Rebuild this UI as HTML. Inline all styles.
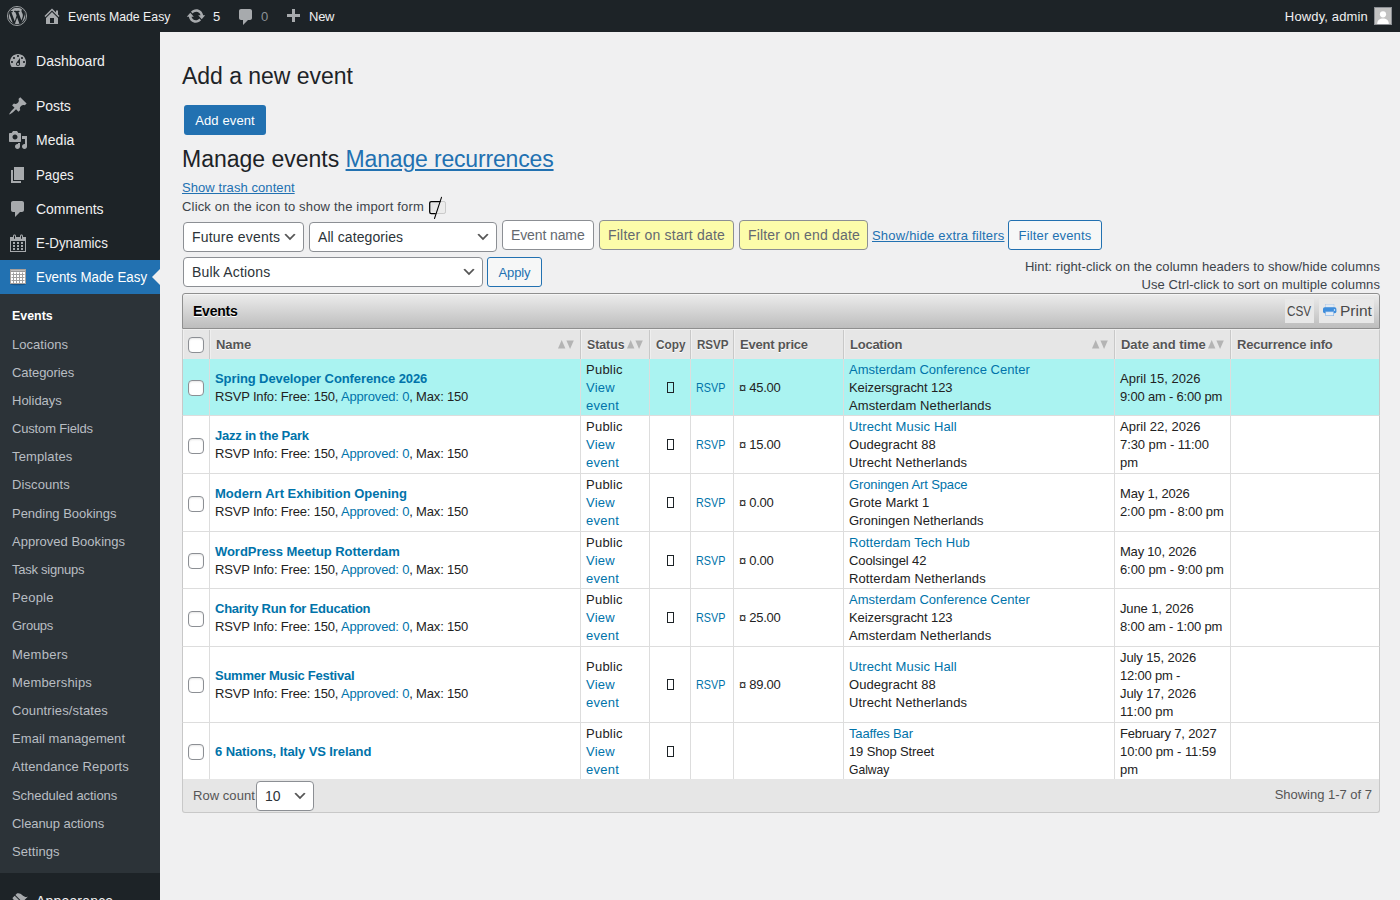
<!DOCTYPE html><html><head><meta charset="utf-8"><title>Events</title><style>
*{box-sizing:border-box;margin:0;padding:0}
html,body{width:1400px;height:900px;overflow:hidden}
body{background:#f0f0f1;font-family:"Liberation Sans",sans-serif;font-size:13px;color:#3c434a;position:relative;line-height:1.4}
.abs{position:absolute;white-space:nowrap}
.ic{position:absolute;display:block}
#bar{position:absolute;left:0;top:0;width:1400px;height:32px;background:#1d2327}
#bar .t{position:absolute;top:1px;height:32px;line-height:32px;font-size:13px;color:#f0f0f1;white-space:nowrap}
#side{position:absolute;left:0;top:32px;width:160px;height:868px;background:#1d2327}
#sub{position:absolute;left:0;top:294px;width:160px;height:579px;background:#2c3338}
.mi{position:absolute;left:36px;height:34px;line-height:34px;font-size:14px;color:#f0f0f1;white-space:nowrap}
.si{position:absolute;left:12px;height:28px;line-height:28px;font-size:13px;color:#b9bec3;white-space:nowrap}
a,.lnk{color:#2271b1;text-decoration:none}
.u{text-decoration:underline}
h1{position:absolute;font-weight:400;font-size:23px;color:#1d2327;white-space:nowrap;line-height:30px}
.sel{position:absolute;background:#fff;border:1px solid #8c8f94;border-radius:4px;font-size:14px;color:#2c3338;white-space:nowrap;padding-left:8px}
.sel svg{position:absolute;right:5px;top:50%;margin-top:-8px;width:16px;height:16px}
.btn2{position:absolute;background:#f6f7f7;border:1px solid #2271b1;border-radius:3px;color:#2271b1;font-size:13px;text-align:center;white-space:nowrap}
.inp{position:absolute;border:1px solid #8c8f94;border-radius:4px;font-size:14px;white-space:nowrap;padding-left:8px}
</style></head><body>
<div id="bar">
<svg class="ic" style="left:7px;top:6px;width:20px;height:20px" viewBox="0 0 20 20"><defs><clipPath id="wpc"><circle cx="10" cy="10" r="8.500"/></clipPath></defs><circle cx="10" cy="10" r="9.550" fill="none" stroke="#a7aaad" stroke-width=".9"/><circle cx="10" cy="10" r="8.300" fill="#a7aaad"/><g clip-path="url(#wpc)"><path fill="#1d2327" d="M20 10c0-5.51-4.49-10-10-10C4.48 0 0 4.49 0 10c0 5.52 4.48 10 10 10 5.51 0 10-4.48 10-10zM7.78 15.37L4.37 6.22c.55-.02 1.17-.08 1.17-.08.5-.06.44-1.13-.06-1.11 0 0-1.45.11-2.37.11-.18 0-.37 0-.58-.01C4.12 2.69 6.87 1.11 10 1.11c2.33 0 4.45.87 6.05 2.34-.68-.11-1.65.39-1.65 1.58 0 .74.45 1.36.9 2.1.35.61.55 1.36.55 2.46 0 1.49-1.4 5-1.4 5l-3.03-8.37c.54-.02.82-.17.82-.17.5-.05.44-1.25-.06-1.22 0 0-1.44.12-2.38.12-.87 0-2.33-.12-2.33-.12-.5-.03-.56 1.2-.06 1.22l.92.08 1.26 3.41zM17.41 10c.24-.64.74-1.87.43-4.25.7 1.29 1.05 2.71 1.05 4.25 0 3.29-1.73 6.24-4.4 7.78.97-2.59 1.94-5.2 2.92-7.78zM6.1 18.09C3.12 16.65 1.11 13.53 1.11 10c0-1.3.23-2.48.72-3.59C3.25 10.3 4.67 14.2 6.1 18.09zm4.03-6.63l2.58 6.98c-.86.29-1.76.45-2.71.45-.79 0-1.57-.11-2.29-.33.81-2.38 1.62-4.74 2.42-7.1z"/></g></svg>
<svg class="ic" style="left:42px;top:6px;width:20px;height:20px;" viewBox="0 0 20 20"><path fill="#a7aaad" d="M16 8.5l1.53 1.53-1.06 1.06L10 4.62l-6.47 6.47-1.06-1.06L10 2.500l4 4v-2h2v4zm-6-2.460l6 5.990V18H4v-5.970zM12 17v-5H8v5h4z"/></svg>
<span class="t" style="left:68px" ><span id="x1" style="display:inline-block;transform:scaleX(0.945);transform-origin:0 50%;margin-right:-6.0px;">Events Made Easy</span></span>
<svg class="ic" style="left:186px;top:6px;width:20px;height:20px;" viewBox="0 0 20 20"><path fill="#a7aaad" d="M10.2 3.28c3.53 0 6.43 2.61 6.92 6h2.080l-3.500 4-3.500-4h2.320c-.45-1.970-2.210-3.450-4.320-3.450-1.450 0-2.730.71-3.540 1.780L4.950 5.660C6.230 4.200 8.110 3.280 10.200 3.280zm-.4 13.440c-3.520 0-6.430-2.610-6.920-6H.8l3.500-4c1.170 1.330 2.330 2.670 3.500 4H5.480c.45 1.970 2.210 3.450 4.320 3.450 1.450 0 2.730-.71 3.540-1.780l1.710 1.950c-1.280 1.460-3.150 2.380-5.250 2.380z"/></svg>
<span class="t" style="left:213px"><span id="x2">5</span></span>
<svg class="ic" style="left:236px;top:7px;width:20px;height:20px;" viewBox="0 0 20 20"><path fill="#a7aaad" d="M5 2h9c1.100 0 2 .9 2 2v7c0 1.100-.9 2-2 2h-2l-5 5v-5H5c-1.100 0-2-.9-2-2V4c0-1.100.9-2 2-2z"/></svg>
<span class="t" style="left:261px;color:#8c9196"><span id="x3">0</span></span>
<svg class="ic" style="left:283px;top:7px;width:20px;height:20px;" viewBox="0 0 20 20"><path fill="#a7aaad" d="M17 7v3h-5v5H9v-5H4V7h5V2h3v5h5z"/></svg>
<span class="t" style="left:309px" ><span id="x4" style="letter-spacing:-0.250px;">New</span></span>
<span class="t" style="right:32px" ><span id="x5" style="letter-spacing:0.145px;">Howdy, admin</span></span>
<div class="abs" style="left:1374px;top:7px;width:18px;height:18px;border:1px solid #8c8f94;background:#c2c2c2;overflow:hidden"><svg viewBox="0 0 16 16" style="position:absolute;left:0;top:0;width:16px;height:16px"><circle cx="8" cy="6.3" r="3.1" fill="#fff"/><path d="M2.2 16c0-4 2.6-5.6 5.800-5.600s5.800 1.600 5.800 5.600z" fill="#fff"/></svg></div>
</div>
<div id="side"></div>
<div class="abs" style="left:0;top:260px;width:160px;height:34px;background:#2271b1"></div>
<div class="abs" style="left:152px;top:269px;width:0;height:0;border:8px solid transparent;border-right-color:#f0f0f1;border-left-width:0"></div>
<div id="sub"></div>
<svg class="ic" style="left:8px;top:51px;width:20px;height:20px;" viewBox="0 0 20 20"><path fill="#a7aaad" d="M3.760 16h12.480c1.100-1.370 1.760-3.110 1.760-5 0-4.420-3.580-8-8-8s-8 3.580-8 8c0 1.890.66 3.630 1.760 5zM10 4c.55 0 1 .45 1 1s-.45 1-1 1-1-.45-1-1 .45-1 1-1zM6 6c.55 0 1 .45 1 1s-.45 1-1 1-1-.45-1-1 .45-1 1-1zm8 0c.55 0 1 .45 1 1s-.45 1-1 1-1-.45-1-1 .45-1 1-1zm-5.370 5.550L12 7v6c0 1.100-.9 2-2 2s-2-.9-2-2c0-.57.24-1.080.63-1.450zM4 10c.55 0 1 .45 1 1s-.45 1-1 1-1-.45-1-1 .45-1 1-1zm12 0c.55 0 1 .45 1 1s-.45 1-1 1-1-.45-1-1 .45-1 1-1zm-5 3c0-.55-.45-1-1-1s-1 .45-1 1 .45 1 1 1 1-.45 1-1z"/></svg>
<span class="mi" style="top:44px"><span id="x6" style="letter-spacing:0.050px;">Dashboard</span></span>
<svg class="ic" style="left:8px;top:96px;width:20px;height:20px;" viewBox="0 0 20 20"><path fill="#a7aaad" d="M10.440 3.020l1.820-1.820 6.360 6.350-1.830 1.820c-1.050-.68-2.480-.57-3.410.36l-.75.75c-.92.93-1.040 2.350-.35 3.410l-1.830 1.820-2.410-2.410-2.800 2.790c-.42.42-3.380 2.710-3.800 2.290s1.860-3.390 2.280-3.810l2.790-2.790L4.100 9.360l1.830-1.820c1.050.69 2.480.57 3.400-.36l.75-.75c.93-.92 1.050-2.350.36-3.410z"/></svg>
<span class="mi" style="top:89px"><span id="x7" style="letter-spacing:-0.050px;">Posts</span></span>
<svg class="ic" style="left:8px;top:130px;width:20px;height:20px;" viewBox="0 0 20 20"><path fill="#a7aaad" d="M13 11V4c0-.55-.45-1-1-1h-1.670L9 1H5L3.670 3H2c-.55 0-1 .45-1 1v7c0 .55.45 1 1 1h10c.55 0 1-.45 1-1zM7 4.500c1.380 0 2.500 1.120 2.500 2.500S8.380 9.500 7 9.500 4.500 8.380 4.500 7 5.620 4.500 7 4.500zM14 6h5v10.500c0 1.380-1.120 2.500-2.500 2.500S14 17.880 14 16.500s1.120-2.500 2.500-2.500c.17 0 .34.02.5.05V9h-3V6zm-4 8.050V13h2v3.500c0 1.380-1.120 2.500-2.500 2.500S7 17.880 7 16.500 8.120 14 9.500 14c.17 0 .34.02.5.05z"/></svg>
<span class="mi" style="top:123px"><span id="x8" style="letter-spacing:0.050px;">Media</span></span>
<svg class="ic" style="left:8px;top:165px;width:20px;height:20px;" viewBox="0 0 20 20"><path fill="#a7aaad" d="M6 15V2h10v13H6zm-1 1h8v2H3V5h2v11z"/></svg>
<span class="mi" style="top:158px"><span id="x9" style="display:inline-block;transform:scaleX(0.9487);transform-origin:0 50%;margin-right:-2.0px;">Pages</span></span>
<svg class="ic" style="left:8px;top:199px;width:20px;height:20px;" viewBox="0 0 20 20"><path fill="#a7aaad" d="M5 2h9c1.100 0 2 .9 2 2v7c0 1.100-.9 2-2 2h-2l-5 5v-5H5c-1.100 0-2-.9-2-2V4c0-1.100.9-2 2-2z"/></svg>
<span class="mi" style="top:192px"><span id="x10" style="letter-spacing:-0.014px;">Comments</span></span>
<svg class="ic" style="left:8px;top:233px;width:20px;height:20px;" viewBox="0 0 20 20"><path fill="#a7aaad" d="M15 4h3v15H2V4h3V3c0-.41.15-.76.44-1.060.29-.29.65-.44 1.060-.44s.77.15 1.060.44c.29.3.44.65.44 1.060v1h4V3c0-.41.15-.76.44-1.060.29-.29.65-.44 1.060-.44s.77.15 1.060.44c.29.3.44.65.44 1.060v1zM6 3v2.500c0 .14.05.26.15.36.09.09.21.14.35.14s.26-.05.35-.14c.1-.1.15-.22.15-.36V3c0-.14-.05-.26-.15-.35-.09-.1-.21-.15-.35-.15s-.26.05-.35.15c-.1.09-.15.21-.15.35zm7 0v2.500c0 .14.05.26.14.36.1.09.22.14.36.14s.26-.05.36-.14c.09-.1.14-.22.14-.36V3c0-.14-.05-.26-.14-.35-.1-.1-.22-.15-.36-.15s-.26.05-.36.15c-.09.09-.14.21-.14.35zm4 15V8H3v10h14zM7 9v2H5V9h2zm2 0h2v2H9V9zm4 2V9h2v2h-2zm-6 1v2H5v-2h2zm2 0h2v2H9v-2zm4 2v-2h2v2h-2zm-6 1v2H5v-2h2zm4 2H9v-2h2v2zm4 0h-2v-2h2v2z"/></svg>
<span class="mi" style="top:226px"><span id="x11" style="display:inline-block;transform:scaleX(0.952);transform-origin:0 50%;margin-right:-3.6px;">E-Dynamics</span></span>
<svg class="ic" style="left:10px;top:269px;width:16px;height:17px" viewBox="0 0 16 17"><defs><linearGradient id="emg" x1="0" y1="0" x2="0" y2="1"><stop offset="0" stop-color="#cfcfcf"/><stop offset="1" stop-color="#858585"/></linearGradient></defs><ellipse cx="8" cy="15.400" rx="7.800" ry=".9" fill="#0f3f6e" opacity=".55"/><rect x=".5" y=".5" width="15" height="14" fill="#fff" stroke="#a6a09c"/><rect x="1" y="1" width="14" height="2" fill="url(#emg)"/><g stroke="#9b9b9b" stroke-width="1" opacity=".95"><path d="M3.500 3.500v10.500M6.500 3.500v10.500M9.500 3.500v10.500M12.500 3.500v10.500M1.500 5.500h13M1.500 8.500h13M1.500 11.500h13"/></g></svg>
<span class="mi" style="top:260px;color:#fff" ><span id="x12" style="display:inline-block;transform:scaleX(0.9513);transform-origin:0 50%;margin-right:-5.7px;">Events Made Easy</span></span>
<span class="si" style="top:302px;color:#fff;font-weight:bold;"><span id="x13" style="display:inline-block;transform:scaleX(0.9535);transform-origin:0 50%;margin-right:-2.0px;">Events</span></span>
<span class="si" style="top:331px;"><span id="x14" style="letter-spacing:0.037px;">Locations</span></span>
<span class="si" style="top:359px;"><span id="x15" style="letter-spacing:-0.078px;">Categories</span></span>
<span class="si" style="top:387px;"><span id="x16">Holidays</span></span>
<span class="si" style="top:415px;"><span id="x17" style="letter-spacing:-0.167px;">Custom Fields</span></span>
<span class="si" style="top:443px;"><span id="x18" style="letter-spacing:0.125px;">Templates</span></span>
<span class="si" style="top:471px;"><span id="x19" style="letter-spacing:0.088px;">Discounts</span></span>
<span class="si" style="top:500px;"><span id="x20" style="letter-spacing:-0.020px;">Pending Bookings</span></span>
<span class="si" style="top:528px;"><span id="x21" style="letter-spacing:0.019px;">Approved Bookings</span></span>
<span class="si" style="top:556px;"><span id="x22" style="letter-spacing:-0.245px;">Task signups</span></span>
<span class="si" style="top:584px;"><span id="x23" style="letter-spacing:0.180px;">People</span></span>
<span class="si" style="top:612px;"><span id="x24" style="letter-spacing:-0.260px;">Groups</span></span>
<span class="si" style="top:641px;"><span id="x25" style="letter-spacing:0.267px;">Members</span></span>
<span class="si" style="top:669px;"><span id="x26" style="letter-spacing:0.180px;">Memberships</span></span>
<span class="si" style="top:697px;"><span id="x27" style="letter-spacing:0.127px;">Countries/states</span></span>
<span class="si" style="top:725px;"><span id="x28" style="letter-spacing:0.067px;">Email management</span></span>
<span class="si" style="top:753px;"><span id="x29" style="letter-spacing:0.112px;">Attendance Reports</span></span>
<span class="si" style="top:782px;"><span id="x30" style="letter-spacing:-0.062px;">Scheduled actions</span></span>
<span class="si" style="top:810px;"><span id="x31" style="letter-spacing:-0.071px;">Cleanup actions</span></span>
<span class="si" style="top:838px;"><span id="x32" style="letter-spacing:0.086px;">Settings</span></span>
<svg class="ic" style="left:8px;top:891px;width:20px;height:20px;" viewBox="0 0 20 20"><path fill="#a7aaad" d="M14.480 11.060L7.410 3.990l1.500-1.500c.5-.56 2.300-.47 3.510.32 1.210.8 1.430 1.280 2.910 2.100 1.180.64 2.450 1.260 4.450.85zm-.71.71L6.700 4.700 4.930 6.470c-.39.39-.39 1.020 0 1.410l1.060 1.060c.39.39.39 1.030 0 1.420-.6.6-1.430 1.110-2.210 1.690-.35.26-.7.53-1.010.84C1.430 14.230.4 16.080 1.400 17.070c.99 1 2.840-.03 4.180-1.360.31-.31.58-.66.85-1.020.57-.78 1.080-1.610 1.690-2.210.39-.39 1.020-.39 1.410 0l1.060 1.060c.39.39 1.020.39 1.410 0z"/></svg>
<span class="mi" style="top:884px"><span id="x33" style="letter-spacing:0.178px;">Appearance</span></span>
<h1 style="left:182px;top:61px" ><span id="x34" style="letter-spacing:-0.036px;">Add a new event</span></h1>
<div class="abs" style="left:184px;top:105px;width:82px;height:30px;background:#2271b1;border-radius:3px;color:#fff;font-size:13px;line-height:32px;text-align:center" ><span id="x35" style="letter-spacing:0.125px;">Add event</span></div>
<h1 style="left:182px;top:144px" ><span id="x36" style="letter-spacing:-0.008px;">Manage events</span> <span class="lnk u"><span id="x37" style="letter-spacing:-0.165px;">Manage recurrences</span></span></h1>
<span class="abs lnk u" style="left:182px;top:179px" ><span id="x38" style="letter-spacing:0.076px;">Show trash content</span></span>
<span class="abs" style="left:182px;top:198px" ><span id="x39" style="letter-spacing:0.175px;">Click on the icon to show the import form</span></span>
<svg class="ic" style="left:420px;top:192px;width:40px;height:30px" viewBox="0 0 40 30"><rect x="9.700" y="9.500" width="15.800" height="12" rx="1.600" fill="#ececec" stroke="#c9c9c9"/><rect x="11.500" y="11.500" width="7" height="8" fill="#dedede"/><rect x="12.500" y="12.500" width="5" height="6" fill="#e9e9e9"/><path d="M20.500 9.500H11.300Q9.700 9.500 9.700 11.100V19.900Q9.700 21.500 11.300 21.500H15.700" fill="none" stroke="#000" stroke-width="1.250"/><path d="M21.500 5.300L14.500 26.500" stroke="#000" stroke-width="1.050" stroke-linecap="round"/></svg>
<div class="sel" style="left:183px;top:222px;width:121px;height:30px;line-height:28px"><span id="x40" style="letter-spacing:0.208px;">Future events</span><svg viewBox="0 0 20 20"><path d="M5 6l5 5 5-5 2 1-7 7-7-7 2-1z" fill="#555"/></svg></div>
<div class="sel" style="left:309px;top:222px;width:188px;height:30px;line-height:28px"><span id="x41" style="letter-spacing:0.077px;">All categories</span><svg viewBox="0 0 20 20"><path d="M5 6l5 5 5-5 2 1-7 7-7-7 2-1z" fill="#555"/></svg></div>
<div class="inp" style="left:502px;top:220px;width:92px;height:30px;line-height:28px;background:#fff;color:#646970"><span id="x42" style="letter-spacing:-0.111px;">Event name</span></div>
<div class="inp" style="left:599px;top:220px;width:135px;height:30px;line-height:28px;background:#fcfcaa;color:#646970"><span id="x43" style="letter-spacing:0.211px;">Filter on start date</span></div>
<div class="inp" style="left:739px;top:220px;width:129px;height:30px;line-height:28px;background:#fcfcaa;color:#646970"><span id="x44" style="letter-spacing:0.165px;">Filter on end date</span></div>
<span class="abs lnk u" style="left:872px;top:227px" ><span id="x45" style="letter-spacing:0.200px;">Show/hide extra filters</span></span>
<div class="btn2" style="left:1008px;top:220px;width:94px;height:30px;line-height:30px" ><span id="x46" style="letter-spacing:0.158px;">Filter events</span></div>
<div class="sel" style="left:183px;top:257px;width:300px;height:30px;line-height:28px"><span id="x47" style="letter-spacing:0.182px;">Bulk Actions</span><svg viewBox="0 0 20 20"><path d="M5 6l5 5 5-5 2 1-7 7-7-7 2-1z" fill="#555"/></svg></div>
<div class="btn2" style="left:487px;top:257px;width:55px;height:30px;line-height:30px" ><span id="x48" style="letter-spacing:-0.125px;">Apply</span></div>
<span class="abs" style="right:20px;top:258px" ><span id="x49" style="letter-spacing:0.090px;">Hint: right-click on the column headers to show/hide columns</span></span>
<span class="abs" style="right:20px;top:276px" ><span id="x50" style="letter-spacing:0.088px;">Use Ctrl-click to sort on multiple columns</span></span>
<style>
#tb{position:absolute;left:182px;top:293px;width:1198px;height:520px}
#tt{position:absolute;left:0;top:0;width:1198px;height:36px;border:1px solid #8f8f8f;border-radius:3px 3px 0 0;background:linear-gradient(#ececec,#bdbdbd);box-shadow:inset 0 1px 0 rgba(255,255,255,.5)}
#tt b{position:absolute;left:10px;top:0;line-height:34px;font-size:14px;color:#000;text-shadow:0 1px 0 #fff}
.tbtn{position:absolute;top:5px;height:24px;background:#e8e8e8;color:#4a4a4a;font-size:14px;line-height:24px;white-space:nowrap}
#th{position:absolute;left:0;top:36px;width:1198px;height:30px;background:#e6e6e6;border-left:1px solid #c8c8c8;border-right:1px solid #c8c8c8;border-top:1px solid #efefef}
.hc{position:absolute;top:0;height:29px;line-height:29px;font-weight:bold;font-size:13px;color:#555;text-shadow:0 1px 0 #fff;white-space:nowrap;border-right:1px solid #c8c8c8;border-left:1px solid #efefef;padding-left:5px}
.so{position:absolute;right:6px;top:10px;width:16px;height:9px}
.rw{position:absolute;left:0;width:1198px;background:#fff;border-left:1px solid #c8c8c8;border-right:1px solid #c8c8c8;border-bottom:1px solid #ddd}
.rw.hl{background:#aaf3f1}
.c{position:absolute;top:0;bottom:0;border-right:1px solid #ddd;font-size:13px;color:#222;white-space:nowrap}
.ln{position:absolute;left:5px;line-height:18px}
.ln div{height:18px}
.c a{color:#0073aa}
.c b a,.c b{color:#0073aa}
.cb{position:absolute;width:16px;height:16px;border:1px solid #8c8f94;border-radius:4px;background:#fff;box-shadow:inset 0 1px 2px rgba(0,0,0,.1)}
.tofu{position:absolute;width:7px;height:11px;border:1px solid #1d2327;z-index:2}
#tf{position:absolute;left:0;top:486px;width:1198px;height:34px;background:#e6e6e6;border:1px solid #c8c8c8;border-top:none;border-radius:0 0 3px 3px}
</style>
<div id="tb">
<div id="tt"><b><span id="x51" style="letter-spacing:-0.240px;">Events</span></b>
<div class="tbtn" style="left:1102px;width:29px;text-align:center" ><span id="x52" style="display:inline-block;transform:scaleX(0.8379);transform-origin:0 50%;margin-right:-4.7px;">CSV</span></div>
<div class="tbtn" style="left:1136px;width:55px" id="b_print"><svg style="position:absolute;left:4px;top:5px;width:14px;height:12px" viewBox="0 0 14 12"><rect x="2.400" y=".2" width="8.600" height="3.600" fill="#e1eaf3" stroke="#a9c6e6" stroke-width=".5"/><rect x="0" y="3.200" width="13.400" height="6" rx="1.700" fill="#3f8edc"/><rect x="2.700" y="7.800" width="8" height="3.900" fill="#e6edf5" stroke="#7fb0e4" stroke-width=".6"/><circle cx="11.500" cy="6" r=".75" fill="#fff"/></svg><span style="position:absolute;left:21px"><span id="x53" style="display:inline-block;transform:scaleX(1.1071);transform-origin:0 50%;margin-right:3.0px;">Print</span></span></div>
</div>
<div id="th">
<div class="hc" style="left:0px;width:27px;"></div>
<div class="hc" style="left:27px;width:371px;"><span id="x54" style="letter-spacing:-0.033px;">Name</span><svg class="so" viewBox="0 0 16 9"><path d="M0 8.500L3.700 0l3.700 8.500z" fill="#b4b4b4"/><path d="M8.400 .5h7.400L12.100 9z" fill="#b4b4b4"/></svg></div>
<div class="hc" style="left:398px;width:69px;"><span id="x55" style="display:inline-block;transform:scaleX(0.9439);transform-origin:0 50%;margin-right:-2.3px;">Status</span><svg class="so" viewBox="0 0 16 9"><path d="M0 8.500L3.700 0l3.700 8.500z" fill="#b4b4b4"/><path d="M8.400 .5h7.400L12.100 9z" fill="#b4b4b4"/></svg></div>
<div class="hc" style="left:467px;width:41px;"><span id="x56" style="display:inline-block;transform:scaleX(0.9061);transform-origin:0 50%;margin-right:-3.1px;">Copy</span></div>
<div class="hc" style="left:508px;width:43px;"><span id="x57" style="display:inline-block;transform:scaleX(0.8917);transform-origin:0 50%;margin-right:-3.9px;">RSVP</span></div>
<div class="hc" style="left:551px;width:110px;"><span id="x58" style="letter-spacing:-0.200px;">Event price</span></div>
<div class="hc" style="left:661px;width:271px;"><span id="x59" style="letter-spacing:-0.243px;">Location</span><svg class="so" viewBox="0 0 16 9"><path d="M0 8.500L3.700 0l3.700 8.500z" fill="#b4b4b4"/><path d="M8.400 .5h7.400L12.100 9z" fill="#b4b4b4"/></svg></div>
<div class="hc" style="left:932px;width:116px;"><span id="x60" style="letter-spacing:-0.033px;">Date and time</span><svg class="so" viewBox="0 0 16 9"><path d="M0 8.500L3.700 0l3.700 8.500z" fill="#b4b4b4"/><path d="M8.400 .5h7.400L12.100 9z" fill="#b4b4b4"/></svg></div>
<div class="hc" style="left:1048px;width:148px;border-right:none;"><span id="x61" style="letter-spacing:-0.229px;">Recurrence info</span></div>
<div class="cb" style="left:5px;top:7px"></div>
</div>
<div class="rw hl" style="top:66px;height:57px">
<div class="c" style="left:0;width:27px"><div class="cb" style="left:5px;top:21px"></div></div>
<div class="c" style="left:27px;width:371px;"><div class="ln" style="top:11px"><div><b class="nm"><span id="x62" style="letter-spacing:-0.097px;">Spring Developer Conference 2026</span></b></div><div><span id="x63" style="letter-spacing:-0.174px;">RSVP Info: Free: 150, <a>Approved: 0</a>, Max: 150</span></div></div></div>
<div class="c" style="left:398px;width:69px;"><div class="ln" style="top:2px"><div><span id="x64" style="letter-spacing:0.240px;">Public</span></div><div><a><span id="x65" style="letter-spacing:0.267px;">View</span></a></div><div><a><span id="x66" style="letter-spacing:0.250px;">event</span></a></div></div></div>
<div class="tofu" style="left:484px;top:23px"></div>
<div class="c" style="left:467px;width:41px;"></div>
<div class="c" style="left:508px;width:43px;"><div class="ln" style="top:20px"><div><a><span id="x67" style="display:inline-block;transform:scaleX(0.8278);transform-origin:0 50%;margin-right:-6.2px;">RSVP</span></a></div></div></div>
<div class="c" style="left:551px;width:110px;"><div class="ln" style="top:20px"><div><span id="x68" style="letter-spacing:-0.267px;">¤ 45.00</span></div></div></div>
<div class="c" style="left:661px;width:271px;"><div class="ln" style="top:2px"><div><a><span id="x69" style="letter-spacing:0.031px;">Amsterdam Conference Center</span></a></div><div><span id="x70" style="letter-spacing:-0.075px;">Keizersgracht 123</span></div><div><span id="x71" style="letter-spacing:0.100px;">Amsterdam Netherlands</span></div></div></div>
<div class="c" style="left:932px;width:116px;"><div class="ln" style="top:11px"><div><span id="x72" style="letter-spacing:0.015px;">April 15, 2026</span></div><div><span id="x73" style="letter-spacing:-0.194px;">9:00 am - 6:00 pm</span></div></div></div>
<div class="c" style="left:1048px;width:148px;border-right:none;"></div>
</div>
<div class="rw" style="top:123px;height:58px">
<div class="c" style="left:0;width:27px"><div class="cb" style="left:5px;top:22px"></div></div>
<div class="c" style="left:27px;width:371px;"><div class="ln" style="top:11px"><div><b class="nm"><span id="x74" style="letter-spacing:-0.233px;">Jazz in the Park</span></b></div><div><span id="x75" style="letter-spacing:-0.174px;">RSVP Info: Free: 150, <a>Approved: 0</a>, Max: 150</span></div></div></div>
<div class="c" style="left:398px;width:69px;"><div class="ln" style="top:2px"><div><span id="x76" style="letter-spacing:0.240px;">Public</span></div><div><a><span id="x77" style="letter-spacing:0.267px;">View</span></a></div><div><a><span id="x78" style="letter-spacing:0.250px;">event</span></a></div></div></div>
<div class="tofu" style="left:484px;top:23px"></div>
<div class="c" style="left:467px;width:41px;"></div>
<div class="c" style="left:508px;width:43px;"><div class="ln" style="top:20px"><div><a><span id="x79" style="display:inline-block;transform:scaleX(0.8278);transform-origin:0 50%;margin-right:-6.2px;">RSVP</span></a></div></div></div>
<div class="c" style="left:551px;width:110px;"><div class="ln" style="top:20px"><div><span id="x80" style="letter-spacing:-0.267px;">¤ 15.00</span></div></div></div>
<div class="c" style="left:661px;width:271px;"><div class="ln" style="top:2px"><div><a><span id="x81" style="letter-spacing:0.135px;">Utrecht Music Hall</span></a></div><div><span id="x82" style="letter-spacing:0.058px;">Oudegracht 88</span></div><div><span id="x83" style="letter-spacing:0.139px;">Utrecht Netherlands</span></div></div></div>
<div class="c" style="left:932px;width:116px;"><div class="ln" style="top:2px"><div><span id="x84" style="letter-spacing:0.015px;">April 22, 2026</span></div><div><span id="x85" style="letter-spacing:-0.079px;">7:30 pm - 11:00</span></div><div><span id="x86" style="letter-spacing:-0.100px;">pm</span></div></div></div>
<div class="c" style="left:1048px;width:148px;border-right:none;"></div>
</div>
<div class="rw" style="top:181px;height:58px">
<div class="c" style="left:0;width:27px"><div class="cb" style="left:5px;top:22px"></div></div>
<div class="c" style="left:27px;width:371px;"><div class="ln" style="top:11px"><div><b class="nm"><span id="x87" style="letter-spacing:0.014px;">Modern Art Exhibition Opening</span></b></div><div><span id="x88" style="letter-spacing:-0.174px;">RSVP Info: Free: 150, <a>Approved: 0</a>, Max: 150</span></div></div></div>
<div class="c" style="left:398px;width:69px;"><div class="ln" style="top:2px"><div><span id="x89" style="letter-spacing:0.240px;">Public</span></div><div><a><span id="x90" style="letter-spacing:0.267px;">View</span></a></div><div><a><span id="x91" style="letter-spacing:0.250px;">event</span></a></div></div></div>
<div class="tofu" style="left:484px;top:23px"></div>
<div class="c" style="left:467px;width:41px;"></div>
<div class="c" style="left:508px;width:43px;"><div class="ln" style="top:20px"><div><a><span id="x92" style="display:inline-block;transform:scaleX(0.8278);transform-origin:0 50%;margin-right:-6.2px;">RSVP</span></a></div></div></div>
<div class="c" style="left:551px;width:110px;"><div class="ln" style="top:20px"><div><span id="x93" style="letter-spacing:-0.267px;">¤ 0.00</span></div></div></div>
<div class="c" style="left:661px;width:271px;"><div class="ln" style="top:2px"><div><a><span id="x94" style="letter-spacing:-0.117px;">Groningen Art Space</span></a></div><div><span id="x95" style="letter-spacing:0.058px;">Grote Markt 1</span></div><div><span id="x96" style="letter-spacing:0.005px;">Groningen Netherlands</span></div></div></div>
<div class="c" style="left:932px;width:116px;"><div class="ln" style="top:11px"><div><span id="x97" style="letter-spacing:-0.170px;">May 1, 2026</span></div><div><span id="x98" style="letter-spacing:-0.106px;">2:00 pm - 8:00 pm</span></div></div></div>
<div class="c" style="left:1048px;width:148px;border-right:none;"></div>
</div>
<div class="rw" style="top:239px;height:57px">
<div class="c" style="left:0;width:27px"><div class="cb" style="left:5px;top:21px"></div></div>
<div class="c" style="left:27px;width:371px;"><div class="ln" style="top:11px"><div><b class="nm"><span id="x99" style="letter-spacing:-0.052px;">WordPress Meetup Rotterdam</span></b></div><div><span id="x100" style="letter-spacing:-0.174px;">RSVP Info: Free: 150, <a>Approved: 0</a>, Max: 150</span></div></div></div>
<div class="c" style="left:398px;width:69px;"><div class="ln" style="top:2px"><div><span id="x101" style="letter-spacing:0.240px;">Public</span></div><div><a><span id="x102" style="letter-spacing:0.267px;">View</span></a></div><div><a><span id="x103" style="letter-spacing:0.250px;">event</span></a></div></div></div>
<div class="tofu" style="left:484px;top:23px"></div>
<div class="c" style="left:467px;width:41px;"></div>
<div class="c" style="left:508px;width:43px;"><div class="ln" style="top:20px"><div><a><span id="x104" style="display:inline-block;transform:scaleX(0.8278);transform-origin:0 50%;margin-right:-6.2px;">RSVP</span></a></div></div></div>
<div class="c" style="left:551px;width:110px;"><div class="ln" style="top:20px"><div><span id="x105" style="letter-spacing:-0.267px;">¤ 0.00</span></div></div></div>
<div class="c" style="left:661px;width:271px;"><div class="ln" style="top:2px"><div><a><span id="x106" style="letter-spacing:0.106px;">Rotterdam Tech Hub</span></a></div><div><span id="x107" style="letter-spacing:-0.117px;">Coolsingel 42</span></div><div><span id="x108" style="letter-spacing:0.115px;">Rotterdam Netherlands</span></div></div></div>
<div class="c" style="left:932px;width:116px;"><div class="ln" style="top:11px"><div><span id="x109" style="letter-spacing:-0.209px;">May 10, 2026</span></div><div><span id="x110" style="letter-spacing:-0.106px;">6:00 pm - 9:00 pm</span></div></div></div>
<div class="c" style="left:1048px;width:148px;border-right:none;"></div>
</div>
<div class="rw" style="top:296px;height:58px">
<div class="c" style="left:0;width:27px"><div class="cb" style="left:5px;top:22px"></div></div>
<div class="c" style="left:27px;width:371px;"><div class="ln" style="top:11px"><div><b class="nm"><span id="x111" style="letter-spacing:-0.229px;">Charity Run for Education</span></b></div><div><span id="x112" style="letter-spacing:-0.174px;">RSVP Info: Free: 150, <a>Approved: 0</a>, Max: 150</span></div></div></div>
<div class="c" style="left:398px;width:69px;"><div class="ln" style="top:2px"><div><span id="x113" style="letter-spacing:0.240px;">Public</span></div><div><a><span id="x114" style="letter-spacing:0.267px;">View</span></a></div><div><a><span id="x115" style="letter-spacing:0.250px;">event</span></a></div></div></div>
<div class="tofu" style="left:484px;top:23px"></div>
<div class="c" style="left:467px;width:41px;"></div>
<div class="c" style="left:508px;width:43px;"><div class="ln" style="top:20px"><div><a><span id="x116" style="display:inline-block;transform:scaleX(0.8278);transform-origin:0 50%;margin-right:-6.2px;">RSVP</span></a></div></div></div>
<div class="c" style="left:551px;width:110px;"><div class="ln" style="top:20px"><div><span id="x117" style="letter-spacing:-0.267px;">¤ 25.00</span></div></div></div>
<div class="c" style="left:661px;width:271px;"><div class="ln" style="top:2px"><div><a><span id="x118" style="letter-spacing:0.031px;">Amsterdam Conference Center</span></a></div><div><span id="x119" style="letter-spacing:-0.075px;">Keizersgracht 123</span></div><div><span id="x120" style="letter-spacing:0.100px;">Amsterdam Netherlands</span></div></div></div>
<div class="c" style="left:932px;width:116px;"><div class="ln" style="top:11px"><div><span id="x121" style="letter-spacing:-0.127px;">June 1, 2026</span></div><div><span id="x122" style="letter-spacing:-0.194px;">8:00 am - 1:00 pm</span></div></div></div>
<div class="c" style="left:1048px;width:148px;border-right:none;"></div>
</div>
<div class="rw" style="top:354px;height:76px">
<div class="c" style="left:0;width:27px"><div class="cb" style="left:5px;top:30px"></div></div>
<div class="c" style="left:27px;width:371px;"><div class="ln" style="top:20px"><div><b class="nm"><span id="x123" style="letter-spacing:-0.250px;">Summer Music Festival</span></b></div><div><span id="x124" style="letter-spacing:-0.174px;">RSVP Info: Free: 150, <a>Approved: 0</a>, Max: 150</span></div></div></div>
<div class="c" style="left:398px;width:69px;"><div class="ln" style="top:11px"><div><span id="x125" style="letter-spacing:0.240px;">Public</span></div><div><a><span id="x126" style="letter-spacing:0.267px;">View</span></a></div><div><a><span id="x127" style="letter-spacing:0.250px;">event</span></a></div></div></div>
<div class="tofu" style="left:484px;top:32px"></div>
<div class="c" style="left:467px;width:41px;"></div>
<div class="c" style="left:508px;width:43px;"><div class="ln" style="top:29px"><div><a><span id="x128" style="display:inline-block;transform:scaleX(0.8278);transform-origin:0 50%;margin-right:-6.2px;">RSVP</span></a></div></div></div>
<div class="c" style="left:551px;width:110px;"><div class="ln" style="top:29px"><div><span id="x129" style="letter-spacing:-0.267px;">¤ 89.00</span></div></div></div>
<div class="c" style="left:661px;width:271px;"><div class="ln" style="top:11px"><div><a><span id="x130" style="letter-spacing:0.135px;">Utrecht Music Hall</span></a></div><div><span id="x131" style="letter-spacing:0.058px;">Oudegracht 88</span></div><div><span id="x132" style="letter-spacing:0.139px;">Utrecht Netherlands</span></div></div></div>
<div class="c" style="left:932px;width:116px;"><div class="ln" style="top:2px"><div><span id="x133" style="letter-spacing:-0.100px;">July 15, 2026</span></div><div><span id="x134" style="letter-spacing:-0.211px;">12:00 pm -</span></div><div><span id="x135" style="letter-spacing:-0.100px;">July 17, 2026</span></div><div><span id="x136" style="letter-spacing:0.014px;">11:00 pm</span></div></div></div>
<div class="c" style="left:1048px;width:148px;border-right:none;"></div>
</div>
<div class="rw" style="top:430px;height:57px">
<div class="c" style="left:0;width:27px"><div class="cb" style="left:5px;top:21px"></div></div>
<div class="c" style="left:27px;width:371px;"><div class="ln" style="top:20px"><div><b class="nm"><span id="x137" style="letter-spacing:-0.100px;">6 Nations, Italy VS Ireland</span></b></div></div></div>
<div class="c" style="left:398px;width:69px;"><div class="ln" style="top:2px"><div><span id="x138" style="letter-spacing:0.240px;">Public</span></div><div><a><span id="x139" style="letter-spacing:0.267px;">View</span></a></div><div><a><span id="x140" style="letter-spacing:0.250px;">event</span></a></div></div></div>
<div class="tofu" style="left:484px;top:23px"></div>
<div class="c" style="left:467px;width:41px;"></div>
<div class="c" style="left:508px;width:43px;"></div>
<div class="c" style="left:551px;width:110px;"></div>
<div class="c" style="left:661px;width:271px;"><div class="ln" style="top:2px"><div><a><span id="x141" style="letter-spacing:-0.150px;">Taaffes Bar</span></a></div><div><span id="x142" style="letter-spacing:-0.123px;">19 Shop Street</span></div><div><span id="x143" style="display:inline-block;transform:scaleX(0.9318);transform-origin:0 50%;margin-right:-3.0px;">Galway</span></div></div></div>
<div class="c" style="left:932px;width:116px;"><div class="ln" style="top:2px"><div><span id="x144" style="letter-spacing:-0.153px;">February 7, 2027</span></div><div><span id="x145" style="letter-spacing:-0.080px;">10:00 pm - 11:59</span></div><div><span id="x146" style="letter-spacing:-0.100px;">pm</span></div></div></div>
<div class="c" style="left:1048px;width:148px;border-right:none;"></div>
</div>
<div id="tf"><span class="abs" style="left:10px;top:0;line-height:33px;color:#555;font-size:13px" ><span id="x147" style="letter-spacing:0.050px;">Row count</span></span>
<div class="sel" style="left:73px;top:2px;width:58px;height:30px;line-height:28px"><span id="x148">10</span><svg viewBox="0 0 20 20"><path d="M5 6l5 5 5-5 2 1-7 7-7-7 2-1z" fill="#555"/></svg></div>
<span class="abs" style="right:7px;top:0;line-height:32px;color:#555;font-size:13px" ><span id="x149" style="letter-spacing:-0.013px;">Showing 1-7 of 7</span></span>
</div>
</div>
</body></html>
